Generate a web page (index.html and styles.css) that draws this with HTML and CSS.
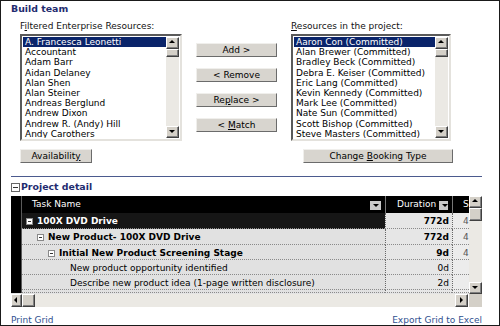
FILE: index.html
```html
<!DOCTYPE html>
<html lang="en">
  <head>
    <meta charset="UTF-8" />
    <title>Build team</title>
    <link rel="stylesheet" href="styles.css">
  </head>
  <body>
    <div class="frame">
      <h2 class="title">Build team</h2>
      <div class="team">
        <div class="col">
          <label class="field-label">F<u>i</u>ltered Enterprise Resources:</label>
          <div class="listbox">
            <ul class="list">
              <li class="selected">A. Francesca Leonetti</li>
              <li>Accountant</li>
              <li>Adam Barr</li>
              <li>Aidan Delaney</li>
              <li>Alan Shen</li>
              <li>Alan Steiner</li>
              <li>Andreas Berglund</li>
              <li>Andrew Dixon</li>
              <li>Andrew R. (Andy) Hill</li>
              <li>Andy Carothers</li>
            </ul>
            <div class="vbar">
              <span class="sb-btn up"></span>
              <span class="sb-thumb"></span>
              <span class="sb-track"></span>
              <span class="sb-btn down"></span>
            </div>
          </div>
          <button class="btn btn-avail" type="button">Availabilit<u>y</u></button>
        </div>

        <div class="moves">
          <button class="btn" type="button">Add &gt;</button>
          <button class="btn" type="button">&lt; Remove</button>
          <button class="btn" type="button">Re<u>p</u>lace &gt;</button>
          <button class="btn" type="button">&lt; <u>M</u>atch</button>
        </div>

        <div class="col col-right">
          <label class="field-label"><u>R</u>esources in the project:</label>
          <div class="listbox">
            <ul class="list">
              <li class="selected">Aaron Con (Committed)</li>
              <li>Alan Brewer (Committed)</li>
              <li>Bradley Beck (Committed)</li>
              <li>Debra E. Keiser (Committed)</li>
              <li>Eric Lang (Committed)</li>
              <li>Kevin Kennedy (Committed)</li>
              <li>Mark Lee (Committed)</li>
              <li>Nate Sun (Committed)</li>
              <li>Scott Bishop (Committed)</li>
              <li>Steve Masters (Committed)</li>
            </ul>
            <div class="vbar">
              <span class="sb-btn up"></span>
              <span class="sb-thumb"></span>
              <span class="sb-track"></span>
              <span class="sb-btn down"></span>
            </div>
          </div>
          <button class="btn btn-booking" type="button">Change <u>B</u>ooking Type</button>
        </div>
      </div>

      <div class="rule"></div>

      <h2 class="title detail"><span class="toggle"></span>Project detail</h2>

      <div class="grid">
        <div class="grid-main">
          <div class="cells">
            <div class="c row-sel"></div>
            <div class="c head">Task Name<span class="dd"></span></div>
            <div class="c head head-dur">Duration<span class="dd"></span></div>
            <div class="c head head-s">S</div>

            <div class="c row-sel"></div>
            <div class="c task top lvl1"><span class="toggle sm"></span>100X DVD Drive</div>
            <div class="c dur bold">772d</div>
            <div class="c s">4</div>

            <div class="c row-sel"></div>
            <div class="c task bold lvl2"><span class="toggle sm"></span>New Product- 100X DVD Drive</div>
            <div class="c dur bold">772d</div>
            <div class="c s">4</div>

            <div class="c row-sel"></div>
            <div class="c task bold lvl3"><span class="toggle sm"></span>Initial New Product Screening Stage</div>
            <div class="c dur bold">9d</div>
            <div class="c s">4</div>

            <div class="c row-sel"></div>
            <div class="c task lvl4">New product opportunity identified</div>
            <div class="c dur">0d</div>
            <div class="c s"></div>

            <div class="c row-sel"></div>
            <div class="c task lvl4">Describe new product idea (1-page written disclosure)</div>
            <div class="c dur">2d</div>
            <div class="c s"></div>

            <div class="c row-sel"></div>
            <div class="c task"></div>
            <div class="c dur"></div>
            <div class="c s"></div>
          </div>
          <div class="vbar grid-vbar">
            <span class="sb-btn up"></span>
            <span class="sb-thumb"></span>
            <span class="sb-track"></span>
            <span class="sb-btn down"></span>
          </div>
        </div>
        <div class="hbar">
          <span class="sb-btn left"></span>
          <span class="sb-thumb"></span>
          <span class="sb-track"></span>
          <span class="sb-btn right"></span>
          <span class="sb-corner"></span>
        </div>
      </div>

      <div class="links">
        <a href="#">Print Grid</a>
        <a href="#">Export Grid to Excel</a>
      </div>
    </div>
  </body>
</html>
```

FILE: styles.css
```css
body {
  margin: 0;
  background: #fff;
  font-family: "DejaVu Sans", Verdana, sans-serif;
  font-size: 9px;
  color: #000;
}

.frame {
  width: 500px;
  height: 326px;
  box-sizing: border-box;
  border: 1px solid #1a1a1a;
  padding: 0 17px 0 10px;
  overflow: hidden;
}

.title {
  margin: 2px 0 0;
  font-size: 9.4px;
  line-height: 12px;
  font-weight: bold;
  color: #1f2c70;
}

/* build team */

.team {
  display: flex;
  margin-top: 5px;
  padding-left: 9px;
}

.col {
  width: 162px;
}

.col-right {
  width: 160px;
  margin-left: 14px;
}

.field-label {
  display: block;
  line-height: 12px;
  margin-bottom: 2px;
  color: #111;
}

.listbox {
  display: flex;
  height: 107px;
  box-sizing: border-box;
  border: 2px solid;
  border-color: #5a5a5a #e4e2dd #e4e2dd #5a5a5a;
  padding: 1px 1px 1px 1px;
  background: #fff;
  overflow: hidden;
}

.list {
  flex: 1;
  margin: 0;
  padding: 0;
  list-style: none;
  overflow: hidden;
}

.list li {
  height: 10.2px;
  line-height: 10.2px;
  padding-left: 2px;
  white-space: nowrap;
}

.list li.selected {
  background: #0a246a;
  color: #fff;
}

/* scrollbars */

.vbar {
  display: flex;
  flex-direction: column;
  width: 13px;
}

.sb-btn,
.sb-thumb {
  position: relative;
  box-sizing: border-box;
  background: #d4d0c8;
  border: 1px solid;
  border-color: #fff #404040 #404040 #fff;
  box-shadow: inset -1px -1px #808080;
}

.vbar .sb-btn {
  height: 12px;
}

.vbar .sb-thumb {
  height: 8px;
}

.sb-track {
  flex: 1;
  background: #ebe9e4;
}

.sb-corner {
  width: 13px;
  background: #d4d0c8;
}

.sb-btn::before {
  content: "";
  position: absolute;
  left: 50%;
  top: 50%;
  width: 0;
  height: 0;
  border: 3px solid transparent;
}

.sb-btn.up::before {
  border-top: 0;
  border-bottom-color: #000;
  margin: -3px 0 0 -4px;
}

.sb-btn.down::before {
  border-bottom: 0;
  border-top-color: #000;
  margin: -2px 0 0 -4px;
}

.sb-btn.left::before {
  border-left: 0;
  border-right-color: #000;
  margin: -4px 0 0 -3px;
}

.sb-btn.right::before {
  border-right: 0;
  border-left-color: #000;
  margin: -4px 0 0 -2px;
}

/* buttons */

.btn {
  display: block;
  height: 14px;
  padding: 0;
  box-sizing: border-box;
  font-family: inherit;
  font-size: 9px;
  line-height: 12px;
  color: #000;
  background: #d8d5cf;
  border: 1px solid;
  border-color: #f0efec #6b6b6b #6b6b6b #f0efec;
}

.btn-avail {
  width: 72px;
  margin-top: 8px;
}

.btn-booking {
  width: 150px;
  margin: 8px 0 0 12px;
}

.moves {
  display: flex;
  flex-direction: column;
  gap: 11px;
  width: 81px;
  margin-left: 14px;
  padding-top: 23px;
}

.moves .btn {
  width: 81px;
}

.rule {
  height: 1px;
  margin-top: 13px;
  background: #4b5a8e;
}

/* project detail */

.title.detail {
  display: flex;
  align-items: center;
  margin-top: 4px;
}

.toggle {
  position: relative;
  width: 9px;
  height: 9px;
  box-sizing: border-box;
  margin-right: 1px;
  border: 1px solid #666;
  background: #fff;
}

.toggle::after {
  content: "";
  position: absolute;
  left: 1px;
  right: 1px;
  top: 3px;
  height: 1px;
  background: #333;
}

.toggle.sm {
  display: inline-block;
  width: 7px;
  height: 7px;
  margin: 0 4px 0 0;
  vertical-align: -1px;
  border-color: #888;
}

.toggle.sm::after {
  top: 2px;
}

.grid {
  width: 471px;
  margin-top: 3px;
}

.grid-main {
  display: flex;
  height: 98px;
}

.cells {
  flex: 1;
  display: grid;
  grid-template-columns: 11px 363px 67px 17px;
  grid-template-rows: 17px 16px 16px 15px 15px 15px 3px;
  overflow: hidden;
  background: #e3e3e3;
}

.c {
  box-sizing: border-box;
  white-space: nowrap;
  overflow: hidden;
  line-height: 14px;
}

.row-sel {
  background: #000;
  border-right: 1px solid #5a5a5a;
}

.head {
  display: flex;
  align-items: flex-end;
  padding: 0 0 2px 10px;
  background: #000;
  color: #fff;
}

.head .dd {
  position: relative;
  width: 11px;
  height: 9px;
  margin-left: auto;
  margin-right: 4px;
  margin-bottom: 1px;
  background: #c9c9c9;
}

.head .dd::before {
  content: "";
  position: absolute;
  left: 3px;
  top: 3px;
  border: 3px solid transparent;
  border-bottom: 0;
  border-top-color: #000;
}

.head-dur {
  padding-left: 11px;
  border-left: 1px solid #777;
}

.head-dur .dd {
  margin-left: 3px;
}

.head-s {
  padding-left: 10px;
  border-left: 1px solid #777;
}

.task {
  padding-top: 1px;
  border-bottom: 1px dotted #8a8a8a;
  background: #e1e1e1;
}

.task.top {
  background: #161616;
  color: #fff;
  font-weight: bold;
}

.lvl1 {
  padding-left: 4px;
}

.lvl2 {
  padding-left: 15px;
}

.lvl3 {
  padding-left: 26px;
}

.lvl4 {
  padding-left: 48px;
}

.bold {
  font-weight: bold;
}

.dur {
  padding: 1px 3px 0 0;
  text-align: right;
  background: #e6e6e6;
  border-left: 1px dotted #666;
  border-bottom: 1px dotted #8a8a8a;
}

.s {
  padding: 1px 0 0 10px;
  color: #555;
  background: #ececec;
  border-left: 1px dotted #666;
  border-bottom: 1px dotted #8a8a8a;
}

.grid-vbar .sb-btn {
  height: 12px;
}

.grid-vbar .sb-thumb {
  height: 13px;
}

.hbar {
  display: flex;
  height: 13px;
}

.hbar .sb-btn {
  width: 11px;
}

.hbar .sb-btn.right {
  width: 13px;
  margin-right: 1px;
}

.hbar .sb-thumb {
  width: 13px;
}

.links {
  display: flex;
  justify-content: space-between;
  margin-top: 7px;
  line-height: 12px;
}

.links a {
  color: #2f4f8f;
  text-decoration: none;
}
```
